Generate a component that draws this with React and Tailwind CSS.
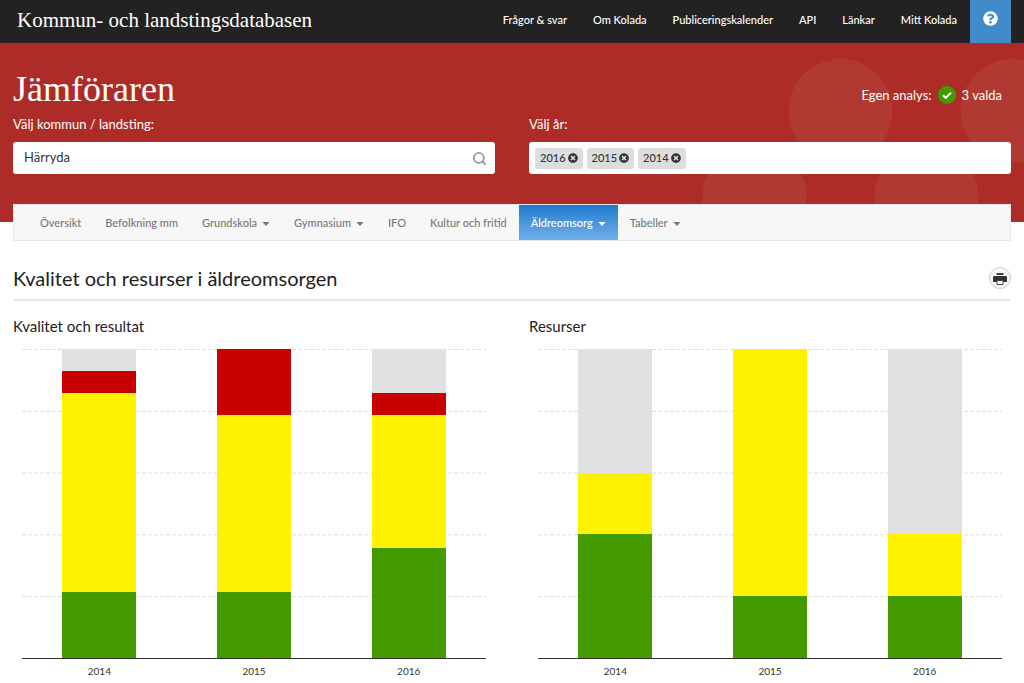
import { useState } from 'react';
import { Search } from 'lucide-react';
import { FaQuestionCircle, FaTimesCircle } from 'react-icons/fa';

const topLinks = ['Frågor & svar', 'Om Kolada', 'Publiceringskalender', 'API', 'Länkar', 'Mitt Kolada'];

const tabs = [
  { name: 'Översikt' },
  { name: 'Befolkning mm' },
  { name: 'Grundskola', menu: true },
  { name: 'Gymnasium', menu: true },
  { name: 'IFO' },
  { name: 'Kultur och fritid' },
  { name: 'Äldreomsorg', menu: true },
  { name: 'Tabeller', menu: true },
];

const charts = [
  {
    title: 'Kvalitet och resultat',
    bars: [
      { year: 2014, none: 1, red: 1, yellow: 9, green: 3 },
      { year: 2015, none: 0, red: 3, yellow: 8, green: 3 },
      { year: 2016, none: 2, red: 1, yellow: 6, green: 5 },
    ],
  },
  {
    title: 'Resurser',
    bars: [
      { year: 2014, none: 2, red: 0, yellow: 1, green: 2 },
      { year: 2015, none: 0, red: 0, yellow: 4, green: 1 },
      { year: 2016, none: 3, red: 0, yellow: 1, green: 1 },
    ],
  },
];

function Caret() {
  return (
    <svg className="w-2 h-1" viewBox="0 0 8 4" fill="currentColor">
      <path d="M0.5 0h7L4 4z" />
    </svg>
  );
}

function CheckIcon() {
  return (
    <svg className="w-[18px] h-[18px]" viewBox="0 0 18 18">
      <circle cx="9" cy="9" r="9" fill="#3f9c00" />
      <path d="M5 9.2l2.8 2.6L13 6.6" fill="none" stroke="#fff" strokeWidth="2" />
    </svg>
  );
}

function PrintIcon() {
  return (
    <svg className="w-[14px] h-3" viewBox="0 0 14 12">
      <path d="M3.5 0h7v2h-7z" fill="#444" />
      <path d="M1 3h12l1 1v5H0V4z" fill="#333" />
      <path d="M4 7.5h6v4H4z" fill="#fff" stroke="#444" />
    </svg>
  );
}

function Chart({ title, bars }) {
  return (
    <section className="flex-1">
      <h2 className="text-[15px] leading-5 text-[#222]">{title}</h2>
      <div className="mt-[13px] px-[9px]">
        <div className="relative h-[310px] border-b border-[#333]">
          <svg className="absolute inset-0 w-full h-full" stroke="#ddd" strokeDasharray="4 2">
            {['0%', '20%', '40%', '60%', '80%'].map(y => (
              <line key={y} x1="0" x2="100%" y1={y} y2={y} transform="translate(0 0.5)" />
            ))}
          </svg>
          <div className="relative flex h-full">
            {bars.map(bar => (
              <div key={bar.year} className="flex-1 flex justify-center">
                <div className="w-[48%] h-full flex flex-col">
                  <div className="bg-[#e1e1e1] basis-0" style={{ flexGrow: bar.none }} />
                  <div className="bg-[#c80000] basis-0" style={{ flexGrow: bar.red }} />
                  <div className="bg-[#fff200] basis-0" style={{ flexGrow: bar.yellow }} />
                  <div className="bg-[#449b00] basis-0" style={{ flexGrow: bar.green }} />
                </div>
              </div>
            ))}
          </div>
        </div>
        <div className="flex pt-[2px] pb-2">
          {bars.map(bar => (
            <span key={bar.year} className="flex-1 text-center text-[10px] leading-5 text-[#333]">{bar.year}</span>
          ))}
        </div>
      </div>
    </section>
  );
}

function App() {
  const [place, setPlace] = useState('Härryda');
  const [years, setYears] = useState([2016, 2015, 2014]);
  const [active, setActive] = useState('Äldreomsorg');

  return (
    <div className="min-h-screen bg-white font-['Trebuchet_MS',Lato,sans-serif]">
      <header className="bg-[#222] h-[43px] px-[13px] flex justify-between">
        <a href="#" className="pl-1 pt-1 text-[21px] leading-8 text-white font-['Liberation_Serif',serif]">
          Kommun- och landstingsdatabasen
        </a>
        <nav className="flex">
          {topLinks.map(link => (
            <a key={link} href="#" className="px-[13px] pt-[10px] text-[11px] leading-5 font-medium text-white">{link}</a>
          ))}
          <button aria-label="Hjälp" className="w-[41px] bg-[#428bca] text-white flex justify-center pt-[11px]">
            <FaQuestionCircle size={15} />
          </button>
        </nav>
      </header>

      <div className="relative h-[179px] bg-[#ad2c27] text-white px-[13px] pt-7 overflow-hidden">
        <svg className="absolute top-0 right-0 w-[344px] h-full" viewBox="0 0 344 179" fill="#b03932">
          <circle cx="160.5" cy="68" r="52" />
          <circle cx="332.5" cy="68" r="52" />
          <circle cx="74.5" cy="154" r="52" />
          <circle cx="246.5" cy="154" r="52" />
        </svg>
        <div className="relative flex justify-between">
          <h1 className="text-4xl leading-9 font-['Liberation_Serif',serif]">Jämföraren</h1>
          <p className="flex items-center gap-[6px] pt-3 pr-[9px] text-[13px] leading-4">
            Egen analys:
            <CheckIcon />
            3 valda
          </p>
        </div>
        <div className="relative flex gap-[34px] mt-[7px]">
          <div className="flex-1">
            <label htmlFor="place" className="block text-[13px] leading-5">Välj kommun / landsting:</label>
            <div className="mt-2 h-8 bg-white rounded-[3px] flex items-center pl-[11px] pr-2">
              <input
                id="place"
                className="flex-1 text-[13px] text-[#333] outline-none"
                value={place}
                onChange={e => setPlace(e.target.value)}
              />
              <Search size={15} strokeWidth={3} className="text-[#999]" />
            </div>
          </div>
          <div className="flex-1">
            <label htmlFor="years" className="block text-[13px] leading-5">Välj år:</label>
            <div className="mt-2 h-8 bg-white rounded-[3px] flex items-center gap-1 px-[6px]">
              {years.map(year => (
                <span key={year} className="h-[21px] px-[5px] bg-[#ddd] rounded-[3px] text-[#333] text-[11px] font-medium flex items-center gap-[2px]">
                  {year}
                  <button aria-label={`Ta bort ${year}`} onClick={() => setYears(years.filter(y => y !== year))}>
                    <FaTimesCircle size={10} />
                  </button>
                </span>
              ))}
              <input id="years" className="flex-1 text-[13px] text-[#333] outline-none" />
            </div>
          </div>
        </div>
      </div>

      <main className="px-[13px]">
        <nav className="relative -mt-[18px] h-[37px] bg-[#f7f7f7] border border-[#e7e7e7] flex pl-[14px]">
          {tabs.map(tab => (
            <button
              key={tab.name}
              onClick={() => setActive(tab.name)}
              className={`px-3 pt-[2px] flex items-center gap-[5px] text-[11px] font-medium ${active === tab.name ? 'bg-linear-to-b from-[#1b7bd0] to-[#6fb0e8] text-white' : 'text-[#777]'}`}
            >
              {tab.name}
              {tab.menu && <Caret />}
            </button>
          ))}
        </nav>

        <div className="mt-[23px] h-[37px] border-b-2 border-[#e8e8e8] flex justify-between">
          <h2 className="text-xl leading-7 text-[#222]">Kvalitet och resurser i äldreomsorgen</h2>
          <button aria-label="Skriv ut" className="mt-[3px] w-[22px] h-[22px] rounded-full border border-[#ccc] bg-[#f7f7f7] flex items-center justify-center pt-[2px]">
            <PrintIcon />
          </button>
        </div>

        <div className="mt-[15px] flex gap-[34px]">
          {charts.map(chart => (
            <Chart key={chart.title} {...chart} />
          ))}
        </div>
      </main>
    </div>
  );
}

export default App;
